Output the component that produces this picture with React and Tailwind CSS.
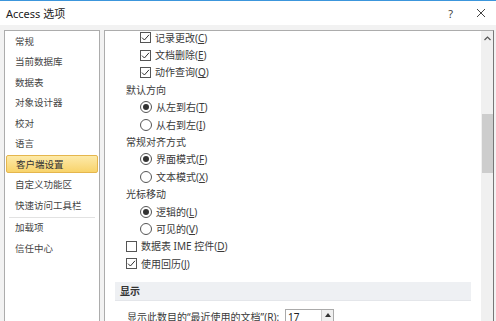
import React from "react";

const F = { fontFamily: '"Noto Sans", "Noto Sans CJK SC", sans-serif' };

function Check({ checked }) {
  return (
    <span className="w-[11px] h-[11px] border border-[#555] bg-white flex items-center justify-center shrink-0">
      {checked && (
        <svg width="9" height="9" viewBox="0 0 9 9">
          <path d="M1 4.6 L3.4 7 L8 1.8" fill="none" stroke="#333" strokeWidth="1" />
        </svg>
      )}
    </span>
  );
}

function Radio({ checked }) {
  return (
    <span className="w-[12px] h-[12px] rounded-full border border-[#555] bg-white flex items-center justify-center shrink-0">
      {checked && <span className="w-[6px] h-[6px] rounded-full bg-[#333]" />}
    </span>
  );
}

function Row({ indent, children }) {
  return (
    <div className={`h-[17.4px] flex items-center gap-[4px] ${indent}`}>{children}</div>
  );
}

function Label({ children }) {
  return <span className="text-[10px] text-[#3a3a3a] leading-none">{children}</span>;
}

export default function App() {
  const menu = ["常规", "当前数据库", "数据表", "对象设计器", "校对", "语言"];
  const menu2 = ["自定义功能区", "快速访问工具栏"];
  return (
    <div className="w-[496px] h-[321px] overflow-hidden flex flex-col bg-white" style={F}>
      <div className="h-[25px] shrink-0 border-t border-[#3c96dc] bg-white flex items-center pl-[6px] pr-[10px]">
        <span className="text-[11px] text-[#222] leading-none">Access 选项</span>
        <span className="ml-auto text-[11px] text-[#444] leading-none mr-[23px]">?</span>
        <svg width="10" height="10" viewBox="0 0 10 10">
          <path d="M1 1 L9 9 M9 1 L1 9" stroke="#444" strokeWidth="1" />
        </svg>
      </div>
      <div className="flex-1 bg-[#f2f2f2] flex gap-[4px] pl-[4px] pr-[2px] pt-[5px] min-h-0">
        <div className="w-[96px] shrink-0 bg-white border border-[#acacac] border-b-0 flex flex-col">
          {menu.map((m) => (
            <div key={m} className="h-[20.5px] flex items-center pl-[10px] text-[9.5px] text-[#444] leading-none">
              {m}
            </div>
          ))}
          <div className="h-[20.5px] flex items-center">
            <div className="mx-[1px] w-full h-[18px] rounded-[2px] border border-[#e5b64d] bg-gradient-to-b from-[#fdeaa8] to-[#f8d36a] flex items-center pl-[9px] text-[9.5px] text-[#333] leading-none">
              客户端设置
            </div>
          </div>
          {menu2.map((m) => (
            <div key={m} className="h-[20.5px] flex items-center pl-[10px] text-[9.5px] text-[#444] leading-none">
              {m}
            </div>
          ))}
          <div className="h-[2px] mx-[4px] border-b border-[#e2e2e2]" />
          {["加载项", "信任中心"].map((m) => (
            <div key={m} className="h-[20.5px] flex items-center pl-[10px] text-[9.5px] text-[#444] leading-none">
              {m}
            </div>
          ))}
        </div>
        <div className="flex-1 bg-white border border-[#acacac] border-b-0 border-r-[#777] flex min-w-0">
          <div className="flex-1 overflow-hidden">
            <div className="-mt-[2px]">
              <Row indent="pl-[35px]"><Check checked /><Label>记录更改(<u>C</u>)</Label></Row>
              <Row indent="pl-[35px]"><Check checked /><Label>文档删除(<u>E</u>)</Label></Row>
              <Row indent="pl-[35px]"><Check checked /><Label>动作查询(<u>Q</u>)</Label></Row>
              <Row indent="pl-[21px]"><Label>默认方向</Label></Row>
              <Row indent="pl-[35px]"><Radio checked /><Label>从左到右(<u>T</u>)</Label></Row>
              <Row indent="pl-[35px]"><Radio /><Label>从右到左(<u>I</u>)</Label></Row>
              <Row indent="pl-[21px]"><Label>常规对齐方式</Label></Row>
              <Row indent="pl-[35px]"><Radio checked /><Label>界面模式(<u>F</u>)</Label></Row>
              <Row indent="pl-[35px]"><Radio /><Label>文本模式(<u>X</u>)</Label></Row>
              <Row indent="pl-[21px]"><Label>光标移动</Label></Row>
              <Row indent="pl-[35px]"><Radio checked /><Label>逻辑的(<u>L</u>)</Label></Row>
              <Row indent="pl-[35px]"><Radio /><Label>可见的(<u>V</u>)</Label></Row>
              <Row indent="pl-[21px]"><Check /><Label>数据表 IME 控件(<u>D</u>)</Label></Row>
              <Row indent="pl-[21px]"><Check checked /><Label>使用回历(<u>J</u>)</Label></Row>
              <div className="mt-[10px] ml-[10px] mr-[10px] h-[19px] bg-[#eef0f3] border-b border-[#e4e6ea] flex items-center pl-[5px]">
                <span className="text-[10px] font-bold text-[#333] leading-none">显示</span>
              </div>
              <div className="mt-[8px] pl-[22px] flex items-center gap-[6px]">
                <Label>显示此数目的“最近使用的文档”(<u>R</u>):</Label>
                <div className="w-[49px] h-[16px] border border-[#aaa] flex items-center">
                  <span className="flex-1 text-[10px] text-[#222] leading-none pl-[2px]">17</span>
                  <div className="w-[12px] h-full border-l border-[#ccc] bg-[#f0f0f0] flex items-start justify-center pt-[3px]">
                    <svg width="6" height="4" viewBox="0 0 6 4"><path d="M0 4 L3 0 L6 4 Z" fill="#333" /></svg>
                  </div>
                </div>
              </div>
            </div>
          </div>
          <div className="w-[12px] shrink-0 bg-[#f0f0f0] flex flex-col items-center">
            <div className="h-[14px] flex items-center justify-center">
              <svg width="7" height="5" viewBox="0 0 7 5"><path d="M0.5 4 L3.5 1 L6.5 4" fill="none" stroke="#555" strokeWidth="1.2" /></svg>
            </div>
            <div className="mt-[69px] w-[11px] h-[59px] bg-[#cdcdcd]" />
          </div>
        </div>
      </div>
    </div>
  );
}
